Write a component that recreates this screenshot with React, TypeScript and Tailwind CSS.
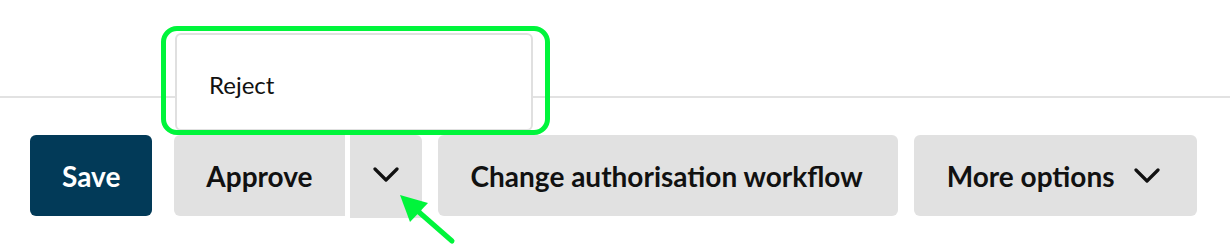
import React from "react";

const Chevron = ({ className = "" }: { className?: string }) => (
  <svg className={className} width="26" height="16" viewBox="0 0 26 16" fill="none">
    <polyline points="2,2 13,13 24,2" stroke="#111" strokeWidth="3.2" strokeLinecap="round" strokeLinejoin="round" />
  </svg>
);

export default function App() {
  return (
    <div
      className="relative w-[1230px] h-[248px] bg-white overflow-hidden"
      style={{ fontFamily: "Lato, 'Open Sans', sans-serif" }}
    >
      <div className="h-[98px] border-b-2 border-[#e2e2e2]" />
      <div className="flex items-start pl-[30px] pt-[37px]">
        <button className="h-[81px] px-[32px] rounded-[6px] bg-[#023a58] text-white text-[28px] font-bold">
          Save
        </button>
        <div className="flex items-start gap-[5px] ml-[22px]">
          <button className="h-[81px] px-[32px] rounded-l-[6px] bg-[#e1e1e1] text-[#111] text-[28px] font-bold">
            Approve
          </button>
          <button className="h-[83px] w-[72px] rounded-tr-[6px] bg-[#e1e1e1] flex items-center justify-center">
            <Chevron className="mt-[-4px]" />
          </button>
        </div>
        <button className="ml-[16px] h-[81px] pl-[33px] pr-[35px] rounded-[6px] bg-[#e1e1e1] text-[#111] text-[28px] font-bold">
          Change authorisation workflow
        </button>
        <button className="ml-[16px] h-[81px] pl-[33px] pr-[37px] rounded-[6px] bg-[#e1e1e1] text-[#111] text-[28px] font-bold flex items-center gap-[19px]">
          More options
          <Chevron />
        </button>
      </div>

      {/* dropdown menu */}
      <div className="absolute left-[175px] top-[33px] w-[358px] h-[98px] bg-white border-2 border-[#e0e0e0] rounded-[6px] flex items-center pl-[32px]">
        <span className="text-[24px] text-[#111] mt-[5px]">Reject</span>
      </div>
      {/* highlight */}
      <div className="absolute left-[161px] top-[26px] w-[389px] h-[109px] border-[5px] border-[#00f53b] rounded-[16px]" />
      {/* arrow */}
      <svg className="absolute left-0 top-0 pointer-events-none" width="1230" height="248">
        <line x1="452" y1="241" x2="412" y2="206" stroke="#00f53b" strokeWidth="5" strokeLinecap="round" />
        <polygon points="400,195 428,203 410,222" fill="#00f53b" />
      </svg>
    </div>
  );
}
